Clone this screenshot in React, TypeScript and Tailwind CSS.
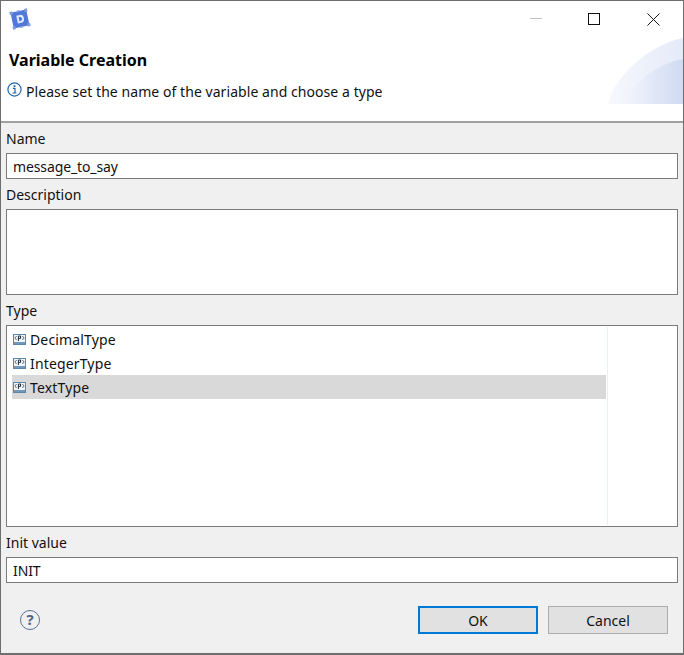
const FONT = "font-['Noto_Sans','Open_Sans',sans-serif]";

// small class icon used in the type list
function TypeIcon() {
  return (
    <svg width="14" height="12" viewBox="0 0 14 12" className="mt-[1px] shrink-0">
      <rect x="0.5" y="0.5" width="12" height="10" fill="#f2f6fa" stroke="#5f86a8" />
      <rect x="1" y="8" width="11" height="2" fill="#6f97bb" />
      <path d="M3.6 2 L1.8 4 L3.6 6 M9.4 2 L11.2 4 L9.4 6" fill="none" stroke="#3d5a78" strokeWidth="0.9" />
      <path d="M5.4 7 V2 H7.6 V4.4 H5.4" fill="none" stroke="#1d2b3a" strokeWidth="1" />
    </svg>
  );
}

function AppLogo() {
  return (
    <svg width="22" height="22" viewBox="0 0 22 22">
      <g transform="rotate(-12 11 11)">
        <rect x="3" y="3" width="16" height="16" fill="#4f78d8" />
        <path d="M8 7 H11.5 Q15 7 15 11 Q15 15 11.5 15 H8 Z M10 9 V13 H11.3 Q13 13 13 11 Q13 9 11.3 9 Z" fill="#dfe8fb" fillRule="evenodd" />
        <rect x="2" y="2" width="3" height="3" fill="#7f9be0" />
        <rect x="17" y="2" width="3" height="3" fill="#7f9be0" />
        <rect x="2" y="17" width="3" height="3" fill="#7f9be0" />
        <rect x="17" y="17" width="3" height="3" fill="#7f9be0" />
        <rect x="9.5" y="2" width="3" height="1.5" fill="#8fa8e4" />
        <rect x="9.5" y="18.5" width="3" height="1.5" fill="#8fa8e4" />
      </g>
    </svg>
  );
}

function Label({ text }: { text: string }) {
  return <div className="h-[30px] pt-[6px] leading-[20px]">{text}</div>;
}

function Field({ label, value }: { label: string; value: string }) {
  return (
    <div>
      <Label text={label} />
      <div className="h-[26px] border border-[#7a7a7a] bg-white px-[6px] leading-[26px] tracking-[-0.12px]">{value}</div>
    </div>
  );
}

export default function App() {
  const types = ["DecimalType", "IntegerType", "TextType"];

  return (
    <div className={`${FONT} flex h-[655px] w-[684px] flex-col border border-b-2 border-[#6e6e6e] bg-[#f0f0f0] text-[14px] text-[#111]`}>
      {/* header */}
      <div className="relative h-[122px] shrink-0 border-b-2 border-[#a0a0a0] bg-white">
        <svg width="75" height="67" viewBox="0 0 75 67" className="absolute right-0 top-[36px]">
          <defs>
            <linearGradient id="g1" x1="0" x2="1" y1="0" y2="0">
              <stop offset="0" stopColor="#f6f8fd" />
              <stop offset="1" stopColor="#e4eaf8" />
            </linearGradient>
            <linearGradient id="g2" x1="0" x2="1" y1="0" y2="0">
              <stop offset="0" stopColor="#f4f6fc" />
              <stop offset="1" stopColor="#cfdbf2" />
            </linearGradient>
          </defs>
          <path d="M0 67 C6 40 40 8 75 1 V67 Z" fill="url(#g1)" />
          <path d="M14 67 C22 48 50 26 75 22 V67 Z" fill="url(#g2)" />
        </svg>
        <div className="flex h-[38px] items-start justify-between">
          <div className="ml-[8px] mt-[7px]"><AppLogo /></div>
          <div className="relative flex">
            <div className="mr-[46px] mt-[17px] h-px w-[12px] bg-[#c4c4c4]" />
            <div className="mr-[47px] mt-[12px] h-[12px] w-[12px] border border-[#111]" />
            <svg width="13" height="13" viewBox="0 0 13 13" className="mr-[23px] mt-[12px]">
              <path d="M0.5 0.5 L12.5 12.5 M12.5 0.5 L0.5 12.5" stroke="#111" strokeWidth="1" />
            </svg>
          </div>
        </div>
        <div className="relative pl-[8px] pt-[9px] text-[16px] font-bold leading-[24px] text-black">Variable Creation</div>
        <div className="relative mt-[7px] flex items-start gap-[4px] pl-[6px] leading-[20px]">
          <svg width="15" height="15" viewBox="0 0 15 15" className="mt-[3px]">
            <circle cx="7.5" cy="7.5" r="6.6" fill="#fff" stroke="#1f64a8" strokeWidth="1.2" />
            <rect x="6.6" y="3.2" width="1.8" height="1.8" fill="#1f64a8" />
            <path d="M5.8 6.4 H8 V10.8 M5.5 11 H9.5" fill="none" stroke="#1f64a8" strokeWidth="1.2" />
          </svg>
          <span className="pt-[3px] tracking-[0.06px]">Please set the name of the variable and choose a type</span>
        </div>
      </div>

      {/* form */}
      <div className="flex flex-1 flex-col px-[5px]">
        <Field label="Name" value="message_to_say" />
        <Label text="Description" />
        <div className="h-[86px] border border-[#7a7a7a] bg-white" />
        <Label text="Type" />
        <div className="flex h-[202px] border border-[#7a7a7a] bg-white pl-[5px] pt-[1px]">
          <div className="w-[594px]">
            {types.map((t) => (
              <div key={t} className={`flex h-[24px] items-center gap-[3px] pl-[1px] tracking-[0.15px] ${t === "TextType" ? "bg-[#d9d9d9]" : ""}`}>
                <TypeIcon />
                {t}
              </div>
            ))}
          </div>
          <div className="mb-[1px] ml-[1px] w-px bg-[#e8f0f6]" />
        </div>
        <Field label="Init value" value="INIT" />

        {/* buttons */}
        <div className="mt-[23px] flex items-center">
          <svg width="22" height="22" viewBox="0 0 22 22" className="ml-[13px]">
            <circle cx="11" cy="11" r="9.5" fill="none" stroke="#5b7194" strokeWidth="1" />
            <text x="11" y="16" textAnchor="middle" fontSize="15" fontWeight="700" fill="#4f6488">?</text>
          </svg>
          <button className="ml-auto h-[28px] w-[120px] border-2 border-[#0078d7] bg-[#e1e1e1] pt-[1px]">OK</button>
          <button className="ml-[10px] mr-[10px] h-[28px] w-[120px] border border-[#adadad] bg-[#e1e1e1] pt-[1px]">Cancel</button>
        </div>
      </div>
    </div>
  );
}
